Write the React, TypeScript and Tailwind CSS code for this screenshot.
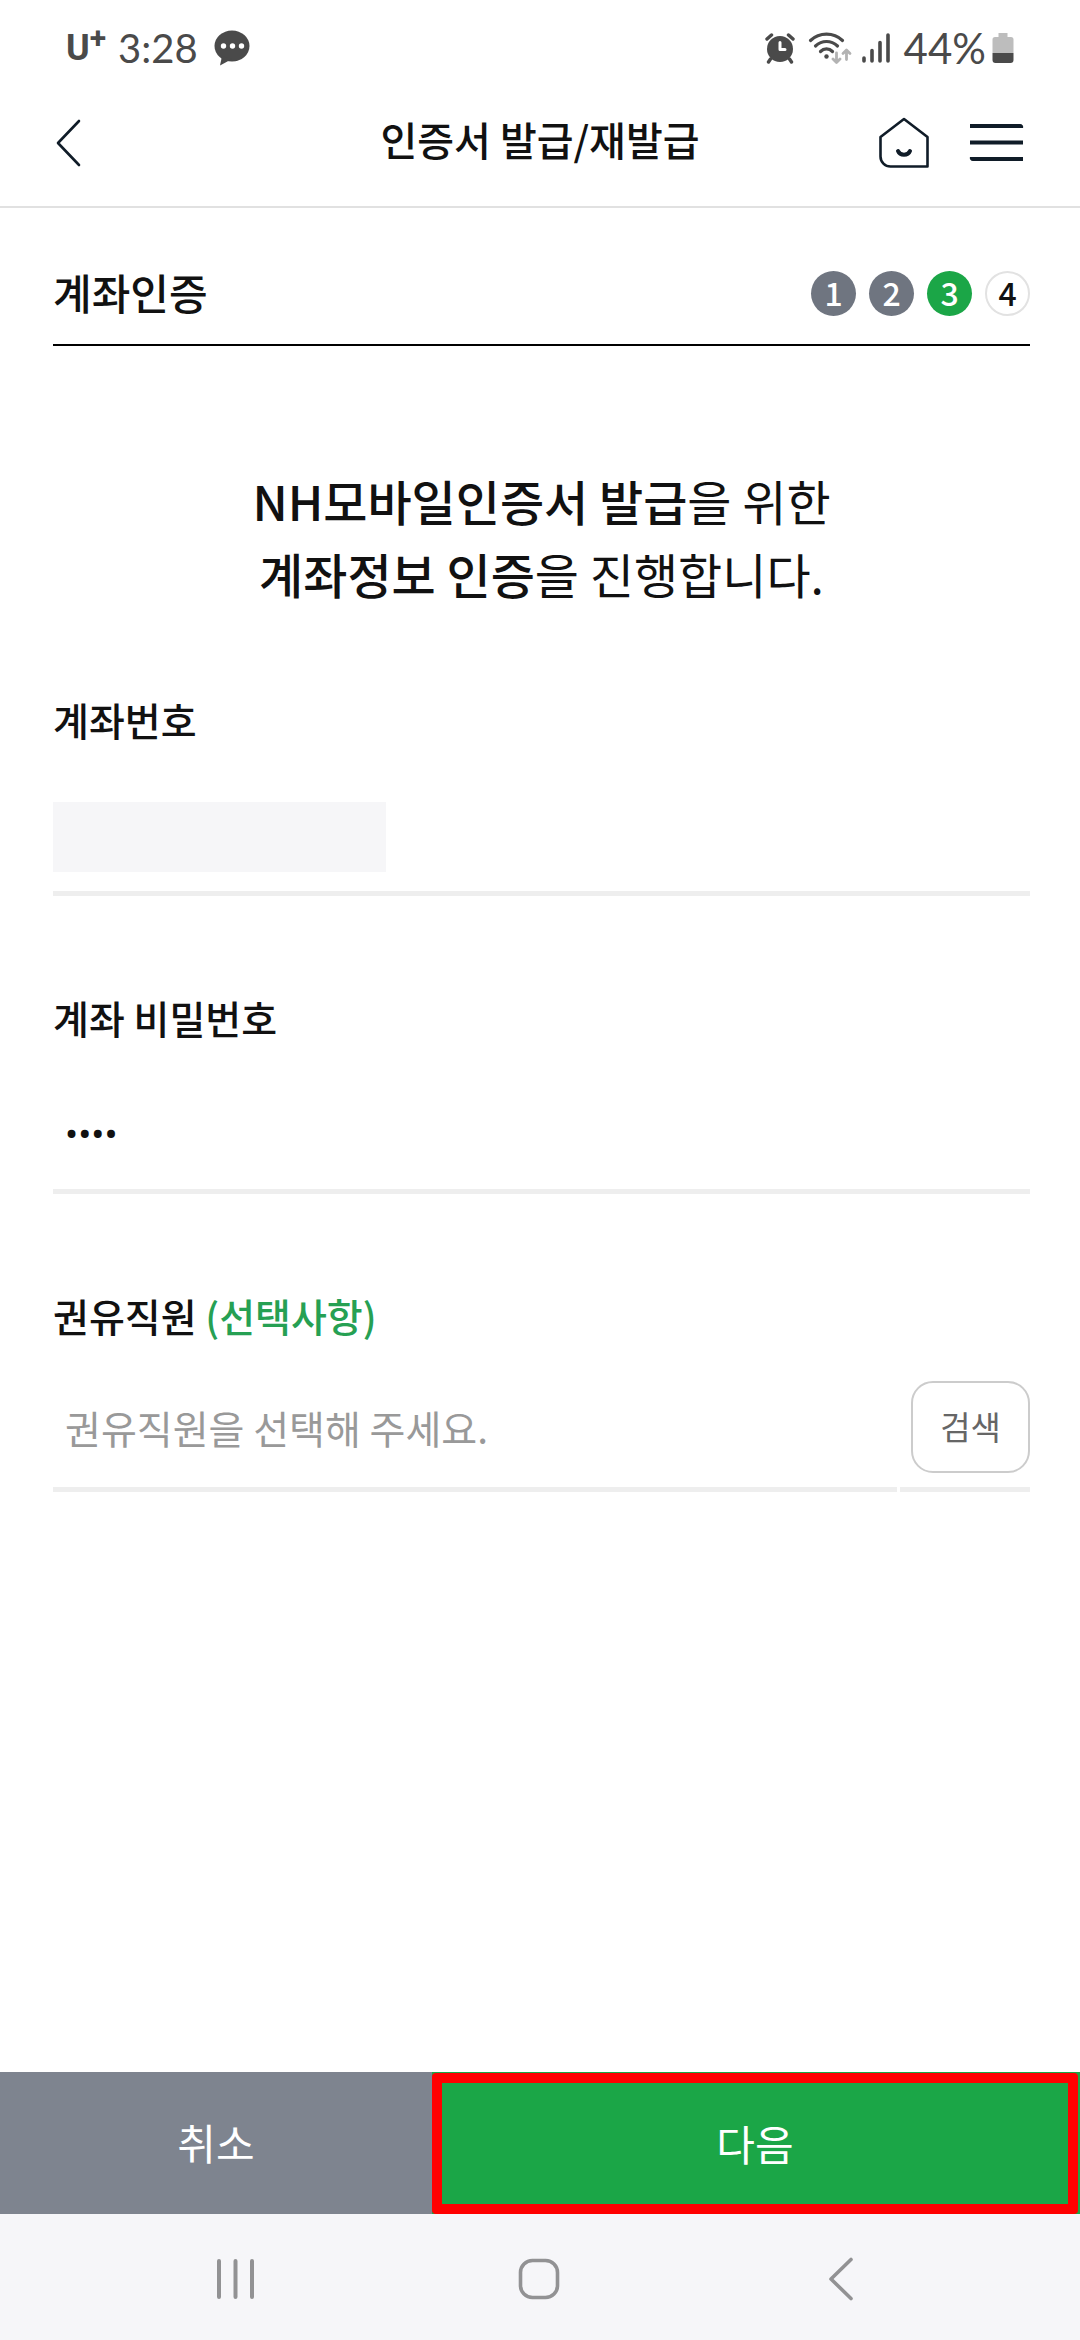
import { useState } from 'react';
import type { ReactNode } from 'react';
import { clsx } from 'clsx';

const STEPS = [1, 2, 3, 4];
const CURRENT_STEP = 3;

const StatusBar = () => (
    <div className="flex h-20 items-center justify-between pt-4 pr-[66px] pl-[66px] font-['Lato',sans-serif] text-[#4a4a4a]">
        <div className="flex items-center">
            <span className="flex items-start font-['Roboto',sans-serif] font-bold">
                <span className="text-4xl leading-10">U</span>
                <span className="text-3xl leading-5">+</span>
            </span>
            <span className="ml-3 text-[40px] leading-10">3:28</span>
            <svg className="ml-4 h-9 w-9" viewBox="0 0 36 36" fill="currentColor">
                <ellipse cx="18" cy="16" rx="17.5" ry="15.5" />
                <path d="M8 26 6 35.500 L18 29z" />
                <circle cx="9.500" cy="16" r="2.700" fill="#fff" />
                <circle cx="18.500" cy="16" r="2.700" fill="#fff" />
                <circle cx="27.500" cy="16" r="2.700" fill="#fff" />
            </svg>
        </div>
        <div className="flex items-center">
            {/* Alarm */}
            <svg className="h-8 w-8" viewBox="0 0 32 32" fill="none" stroke="currentColor" strokeLinecap="round">
                <circle cx="16" cy="17" r="13" fill="currentColor" stroke="none" />
                <path d="M3 7 7.500 3M29 7l-4.500-4M6.500 27 4.500 30M25.500 27l2 3" strokeWidth="3.400" />
                <path d="M16 10.500V17.500h5" stroke="#fff" strokeWidth="3" strokeLinejoin="round" />
            </svg>
            {/* Wi-Fi with traffic arrows */}
            <svg className="ml-3 h-8 w-11" viewBox="0 0 44 32" fill="none" stroke="currentColor" strokeLinecap="round" strokeWidth="3.200">
                <path d="M2.500 8.500C11.500 0 25.500 0 34.500 8.500" />
                <path d="M7.500 14C14 8 23 8 29.500 14" />
                <path d="M12.500 19.500C16 16 21 16 24.500 19.500" />
                <circle cx="18.500" cy="24.500" r="2.200" fill="currentColor" stroke="none" />
                <g stroke="#b3b3b3" strokeWidth="2.800" strokeLinejoin="round">
                    <path d="M28.500 21v9M25 27l3.500 3.500L32 27" />
                    <path d="M38.500 27.500v-9M35 21.500l3.500-3.500 3.500 3.500" />
                </g>
            </svg>
            {/* Signal */}
            <svg className="ml-2 h-8 w-8" viewBox="0 0 32 32" stroke="currentColor" strokeWidth="3.600" strokeLinecap="round">
                <path d="M4 26v3M12 18.500V29M20 10.500V29M28 3v26" />
            </svg>
            <span className="ml-3 text-[42px] leading-10">44%</span>
            <svg className="ml-[6px] h-8 w-[22px]" viewBox="0 0 22 32">
                <path d="M6.500 1h9v4H19a2.500 2.500 0 0 1 2.500 2.500V21H.5V7.500A2.500 2.500 0 0 1 3 5h3.500z" fill="#bdbdbd" />
                <path d="M.5 21h21v7a3 3 0 0 1-3 3h-15a3 3 0 0 1-3-3z" fill="#4a4a4a" />
            </svg>
        </div>
    </div>
);

const Header = () => (
    <header className="grid h-32 grid-cols-[1fr_auto_1fr] items-center border-b-2 border-[#e1e1e1] pr-[55px] pl-[55px] text-[#101c28]">
        <button type="button" aria-label="뒤로" className="justify-self-start">
            <svg className="h-12 w-7" viewBox="0 0 28 48" fill="none" stroke="currentColor" strokeWidth="2.600" strokeLinecap="round" strokeLinejoin="round">
                <path d="M24 2 3 24 24 46" />
            </svg>
        </button>
        <h1 className="pb-2 text-[40px] leading-[48px] font-medium text-[#111]">
            인증서 발급/재발급
        </h1>
        <div className="flex items-center gap-10 justify-self-end">
            <button type="button" aria-label="홈">
                <svg className="h-[52px] w-[50px]" viewBox="0 0 50 52" fill="none" stroke="currentColor" strokeWidth="2.600">
                    <path d="M25 2 48.500 20V49.500H11.500a10 10 0 0 1-10-10V20z" strokeLinejoin="round" />
                    <path d="M19 34c2 5 10 5 12 0" strokeWidth="4" strokeLinecap="round" />
                </svg>
            </button>
            <button type="button" aria-label="전체메뉴">
                <svg className="h-10 w-14" viewBox="0 0 56 40" fill="currentColor">
                    <path d="M1 1h50a3 3 0 0 1 3 4H1z" />
                    <path d="M1 17.500h53v4H1z" />
                    <path d="M1 34h53v4H4a3 3 0 0 1-3-4z" />
                </svg>
            </button>
        </div>
    </header>
);

const StepIndicator = () => (
    <ol className="flex gap-[13px]">
        {STEPS.map((step) => (
            <li
                key={step}
                className={clsx(
                    'flex h-[45px] w-[45px] items-center justify-center rounded-full pb-1 text-[32px] leading-8 font-medium',
                    step < CURRENT_STEP && 'bg-[#6f7580] text-white',
                    step === CURRENT_STEP && 'bg-[#1ba647] text-white',
                    step > CURRENT_STEP && 'border-2 border-[#e2e2e2] text-[#111]',
                )}
            >
                {step}
            </li>
        ))}
    </ol>
);

interface FieldProps {
    id: string;
    label: ReactNode;
    children: ReactNode;
}

const Field = ({ id, label, children }: FieldProps) => (
    <div className="text-[39px] leading-[48px]">
        <label htmlFor={id} className="block font-medium">
            {label}
        </label>
        {children}
    </div>
);

const NavigationBar = () => (
    <nav className="flex h-[126px] items-center justify-between bg-[#f6f6f9] pt-1 pr-[216px] pl-[215px] text-[#929294]">
        <button type="button" aria-label="최근 앱">
            <svg className="h-11 w-10" viewBox="0 0 40 44" stroke="currentColor" strokeWidth="4" strokeLinecap="round">
                <path d="M4 4v36M20.500 4v36M37 4v36" />
            </svg>
        </button>
        <button type="button" aria-label="홈 화면">
            <svg className="h-11 w-11" viewBox="0 0 44 44" fill="none" stroke="currentColor" strokeWidth="3.600">
                <rect x="2.500" y="3.500" width="37" height="37" rx="12" />
            </svg>
        </button>
        <button type="button" aria-label="이전">
            <svg className="h-11 w-10" viewBox="0 0 40 44" fill="none" stroke="currentColor" strokeWidth="3.600" strokeLinecap="round" strokeLinejoin="round">
                <path d="M27 2.500 7 22 27 41.500" />
            </svg>
        </button>
    </nav>
);

export default function App() {
    const [password, setPassword] = useState('1234');
    const [staff, setStaff] = useState('');

    return (
        <div className="flex min-h-screen flex-col bg-white font-['Noto_Sans_CJK_KR',sans-serif] text-[#111]">
            <StatusBar />
            <Header />

            <main className="flex-1 pr-[50px] pl-[53px]">
                <div className="flex items-center justify-between border-b-2 border-black pt-[63px] pb-7">
                    <h2 className="h-[45px] text-[42px] leading-[41px] font-medium">계좌인증</h2>
                    <StepIndicator />
                </div>

                <p className="mt-[118px] text-center text-5xl leading-[73px]">
                    <strong className="font-medium">NH모바일인증서 발급</strong>을 위한
                    <br />
                    <strong className="font-medium">계좌정보 인증</strong>을 진행합니다.
                </p>

                <form className="mt-[85px] flex flex-col gap-[97px]">
                    <Field id="account" label="계좌번호">
                        <div className="h-[153px] border-b-[5px] border-[#eee] pt-[59px]">
                            <input
                                id="account"
                                type="text"
                                readOnly
                                className="block h-[70px] w-[333px] bg-[#f6f6f8] px-3 outline-none"
                            />
                        </div>
                    </Field>

                    <Field id="password" label="계좌 비밀번호">
                        <input
                            id="password"
                            type="password"
                            autoComplete="off"
                            value={password}
                            onChange={(e) => setPassword(e.target.value)}
                            className="block h-[153px] w-full border-b-[5px] border-[#eee] pt-10 pl-3 font-['Roboto',sans-serif] text-[39px] outline-none"
                        />
                    </Field>

                    <Field
                        id="staff"
                        label={
                            <>
                                권유직원 <span className="text-[#26a053]">(선택사항)</span>
                            </>
                        }
                    >
                        <div className="flex h-[153px] gap-[3px]">
                            <input
                                id="staff"
                                type="text"
                                value={staff}
                                placeholder="권유직원을 선택해 주세요."
                                onChange={(e) => setStaff(e.target.value)}
                                className="min-w-0 flex-1 border-b-[5px] border-[#eee] pt-7 pl-3 outline-none placeholder:text-[#999]"
                            />
                            <div className="border-b-[5px] border-[#eee] pt-[42px] pl-[11px]">
                                <button
                                    type="button"
                                    className="h-[92px] w-[119px] rounded-[22px] border-2 border-[#ccc] pb-[2px] text-[33px] text-[#666]"
                                >
                                    검색
                                </button>
                            </div>
                        </div>
                    </Field>
                </form>
            </main>

            <div className="flex h-[142px] text-[42px] leading-[48px] text-white">
                <button type="button" className="w-2/5 bg-[#7e848f] pb-[2px]">
                    취소
                </button>
                {/* Red frame marks the button to press */}
                <div className="flex w-3/5 bg-[#1ba647] pt-px pr-[2px]">
                    <button type="button" className="flex-1 rounded-[4px] bg-[#f00] p-[10px]">
                        <span className="flex h-full items-center justify-center bg-[#1ba647] pb-[2px]">
                            다음
                        </span>
                    </button>
                </div>
            </div>
            <NavigationBar />
        </div>
    );
}
